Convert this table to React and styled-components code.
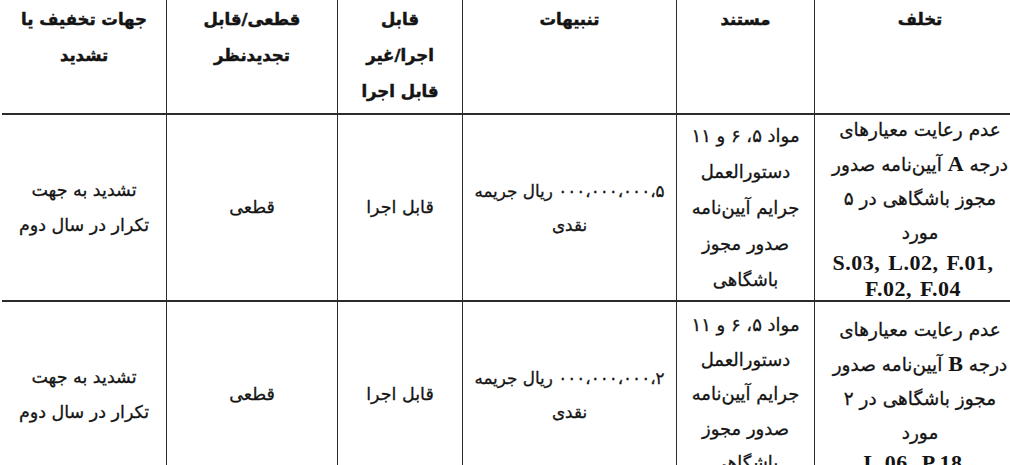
import React from "react";
import styled, { createGlobalStyle } from "styled-components";

const Global = createGlobalStyle`
  html, body { margin: 0; padding: 0; background: #fff; }
  body { font-family: "DejaVu Sans", "Noto Sans", sans-serif; color: #111; }
`;

const Page = styled.div`
  width: 1010px;
  height: 465px;
  overflow: hidden;
  background: #fff;
`;

const Table = styled.div`
  direction: rtl;
  margin-left: 2px;
  width: 1023px;
  display: grid;
  grid-template-columns: 210px 137px 213px 124px 170px 164px;
  grid-template-rows: 113px 185px 185px;
  column-gap: 1px;
  row-gap: 2px;
  background: #2b2b2b;
`;

const Cell = styled.div`
  background: #fff;
  display: flex;
  flex-direction: column;
  align-items: center;
  justify-content: ${(p) => (p.$head ? "flex-start" : "center")};
  text-align: center;
  padding-top: ${(p) => (p.$head ? "2px" : "0")};
  font-weight: ${(p) => (p.$head ? 700 : 400)};
  font-size: ${(p) => p.$fs || (p.$head ? 16.5 : 17.5)}px;
  line-height: ${(p) => p.$lh || 35}px;
  color: #141414;
  white-space: nowrap;
  -webkit-text-stroke: ${(p) => (p.$head ? "0.5px" : "0.3px")} #141414;
`;

const Line = styled.span`
  display: block;
`;

const Latin = styled.span`
  font-family: "Liberation Serif", "Times New Roman", serif;
  font-weight: 700;
  font-size: 22px;
  direction: ltr;
  unicode-bidi: isolate;
  -webkit-text-stroke: 0;
`;

const LatinLine = styled.span`
  display: block;
  font-family: "Liberation Serif", "Times New Roman", serif;
  font-weight: 700;
  font-size: 22px;
  line-height: 26px;
  letter-spacing: 0.5px;
  word-spacing: 2px;
  direction: ltr;
  margin-right: 14px;
  -webkit-text-stroke: 0;
`;

const Amount = styled.span`
  direction: ltr;
  unicode-bidi: isolate;
`;

const headers = [
  ["تخلف"],
  ["مستند"],
  ["تنبیهات"],
  ["قابل", "اجرا/غیر", "قابل اجرا"],
  ["قطعی/قابل", "تجدیدنظر"],
  ["جهات تخفیف یا", "تشدید"],
];

const rows = [
  { grade: "A", count: "۵", codes: ["S.03, L.02, F.01,", "F.02, F.04"], amount: "۰۰۰،۰۰۰،۰۰۰،۵" },
  { grade: "B", count: "۲", codes: ["L.06, P.18"], amount: "۰۰۰،۰۰۰،۰۰۰،۲" },
];

function Row({ r, idx }) {
  return (
    <>
      <Cell $lh={34} $fs={18.5}>
        <Line>عدم رعایت معیارهای</Line>
        <Line>
          درجه <Latin>{r.grade}</Latin> آیین‌نامه صدور
        </Line>
        <Line>مجوز باشگاهی در {r.count}</Line>
        <Line>مورد</Line>
        {r.codes.map((c) => (
          <LatinLine key={c}>{c}</LatinLine>
        ))}
      </Cell>
      <Cell $lh={idx === 0 ? 36 : 34.5} $fs={18}>
        <Line>مواد ۵، ۶ و ۱۱</Line>
        <Line>دستورالعمل</Line>
        <Line>جرایم آیین‌نامه</Line>
        <Line>صدور مجوز</Line>
        <Line>باشگاهی</Line>
      </Cell>
      <Cell $fs={16.8} $lh={34}>
        <Line>
          <Amount>{r.amount}</Amount> ریال جریمه
        </Line>
        <Line>نقدی</Line>
      </Cell>
      <Cell>
        <Line>قابل اجرا</Line>
      </Cell>
      <Cell>
        <Line>قطعی</Line>
      </Cell>
      <Cell>
        <Line>تشدید به جهت</Line>
        <Line>تکرار در سال دوم</Line>
      </Cell>
    </>
  );
}

export default function App() {
  return (
    <Page>
      <Global />
      <Table>
        {headers.map((h, i) => (
          <Cell key={i} $head $lh={36}>
            {h.map((t) => (
              <Line key={t}>{t}</Line>
            ))}
          </Cell>
        ))}
        {rows.map((r, i) => (
          <Row key={i} r={r} idx={i} />
        ))}
      </Table>
    </Page>
  );
}
